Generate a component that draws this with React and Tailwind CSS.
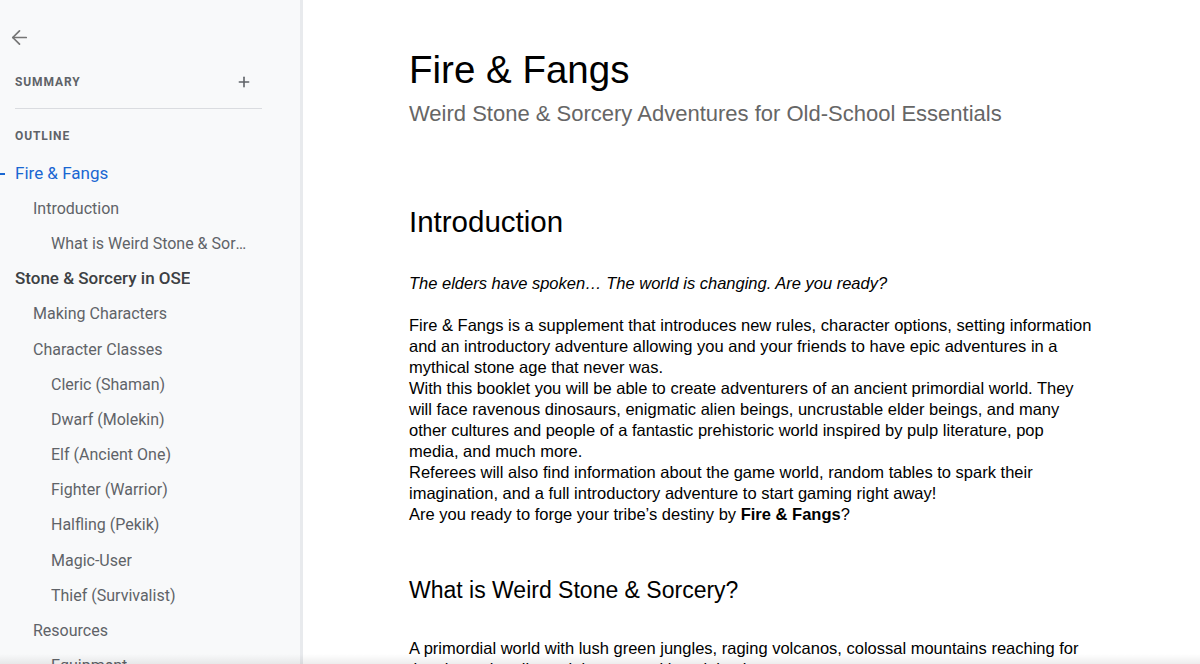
import { ArrowLeft, Plus } from "lucide-react";

const outline = [
  { label: "Fire & Fangs", level: 1, active: true },
  { label: "Introduction", level: 2 },
  { label: "What is Weird Stone & Sorcery?", level: 3 },
  { label: "Stone & Sorcery in OSE", level: 1 },
  { label: "Making Characters", level: 2 },
  { label: "Character Classes", level: 2 },
  { label: "Cleric (Shaman)", level: 3 },
  { label: "Dwarf (Molekin)", level: 3 },
  { label: "Elf (Ancient One)", level: 3 },
  { label: "Fighter (Warrior)", level: 3 },
  { label: "Halfling (Pekik)", level: 3 },
  { label: "Magic-User", level: 3 },
  { label: "Thief (Survivalist)", level: 3 },
  { label: "Resources", level: 2 },
  { label: "Equipment", level: 3 },
];

function OutlineItem({ item }) {
  const indent =
    item.level === 1 ? "pl-[15px]" : item.level === 2 ? "pl-[33px]" : "pl-[51px]";
  const color = item.active
    ? "text-[#1967d2] text-[17px]"
    : item.level === 1
    ? "text-[#3c4043] font-medium text-[17px]"
    : "text-[#5f6368] text-[16px]";

  return (
    <div className={`relative h-[35.2px] flex items-center pr-[52px] ${indent}`}>
      {item.active && (
        <span className="absolute left-0 top-[17px] w-[5px] h-[1.5px] bg-[#1967d2]" />
      )}
      <span className={`truncate ${color}`}>{item.label}</span>
    </div>
  );
}

function Sidebar() {
  return (
    <aside className="w-[303px] shrink-0 bg-[#f8f9fa] border-r-[3px] border-[#e8eaed] overflow-hidden font-['Roboto',sans-serif]">
      <div className="h-[74px] flex items-center pl-[8px]">
        <ArrowLeft size={23} strokeWidth={1.8} className="text-[#757575]" />
      </div>
      <div className="flex items-center justify-between pl-[15px] pr-[48px] h-[14px] mt-[1px]">
        <span className="text-[12px] font-bold tracking-[0.9px] text-[#5f6368]">SUMMARY</span>
        <Plus size={16} strokeWidth={2.4} className="text-[#5f6368]" />
      </div>
      <div className="ml-[15px] mr-[38px] mt-[19px] border-t border-[#dadce0]" />
      <div className="pl-[15px] mt-[20px] h-[14px] flex items-center">
        <span className="text-[12px] font-bold tracking-[0.9px] text-[#5f6368]">OUTLINE</span>
      </div>
      <div className="mt-[13px]">
        {outline.map((item) => (
          <OutlineItem key={item.label} item={item} />
        ))}
      </div>
    </aside>
  );
}

function Document() {
  return (
    <main className="flex-1 bg-white overflow-hidden font-['Liberation_Sans',Arial,sans-serif] text-black">
      <div className="pl-[106px] w-[794px] pt-[46px]">
        <h1 className="text-[38.5px] leading-[48px]">Fire &amp; Fangs</h1>
        <p className="text-[22px] leading-[26px] text-[#666666] mt-[7px]">
          Weird Stone &amp; Sorcery Adventures for Old-School Essentials
        </p>

        <h2 className="text-[29.5px] leading-[34px] mt-[78px]">Introduction</h2>

        <div className="text-[16.5px] leading-[21px] mt-[34px]">
          <p className="italic">The elders have spoken… The world is changing. Are you ready?</p>
          <p className="mt-[21px]">
            Fire &amp; Fangs is a supplement that introduces new rules, character options, setting
            information and an introductory adventure allowing you and your friends to have epic
            adventures in a mythical stone age that never was.
          </p>
          <p>
            With this booklet you will be able to create adventurers of an ancient primordial
            world. They will face ravenous dinosaurs, enigmatic alien beings, uncrustable elder
            beings, and many other cultures and people of a fantastic prehistoric world inspired
            by pulp literature, pop media, and much more.
          </p>
          <p>
            Referees will also find information about the game world, random tables to spark
            their imagination, and a full introductory adventure to start gaming right away!
          </p>
          <p>
            Are you ready to forge your tribe’s destiny by <b>Fire &amp; Fangs</b>?
          </p>
        </div>

        <h3 className="text-[23px] leading-[28px] mt-[51px]">What is Weird Stone &amp; Sorcery?</h3>

        <p className="text-[16.5px] leading-[21px] mt-[34px]">
          A primordial world with lush green jungles, raging volcanos, colossal mountains
          reaching for the sky and endless plains roamed by mighty beasts.
        </p>
      </div>
    </main>
  );
}

export default function App() {
  return (
    <div className="relative flex h-[664px] w-[1200px] overflow-hidden">
      <Sidebar />
      <Document />
      <div className="pointer-events-none absolute bottom-0 left-0 right-0 h-[10px] bg-gradient-to-b from-transparent to-black/[0.07]" />
    </div>
  );
}
